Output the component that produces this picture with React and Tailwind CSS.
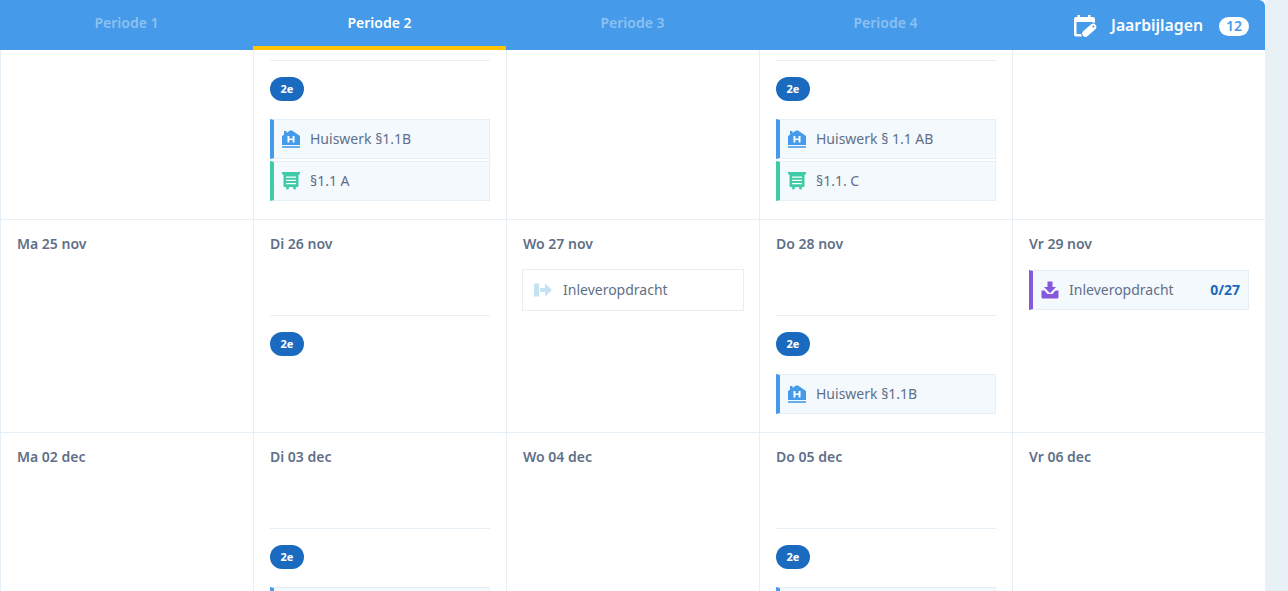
const font = { fontFamily: '"Noto Sans", "Open Sans", sans-serif' };

const HouseIcon = () => (
  <svg width="18" height="18" viewBox="0 0 18 18" className="shrink-0">
    <path fill="#459be9" d="M0 15V6l2-1.300V1h2.500v2L8 .5h2L18 6v9z" />
    <path fill="#459be9" d="M0 16.200h18v1.600H0z" />
    <path fill="#fff" d="M5.500 6h1.900v2.400h3.200V6h1.900v6.500h-1.900v-2.400H7.400v2.400H5.500z" />
  </svg>
);

const NoteIcon = () => (
  <svg width="18" height="18" viewBox="0 0 18 18" className="shrink-0">
    <path fill="#40cba8" d="M0 0h18v2.500h-1.500V14a1 1 0 0 1-1 1H14l-.5 2.500h-2L11 15H7l-.5 2.500h-2L4 15H2.500a1 1 0 0 1-1-1V2.500H0z" />
    <path fill="#fff" d="M4 4.500h10v1.200H4zM4 7.800h10v1.200H4zM4 11.100h10v1.200H4z" />
  </svg>
);

const ArrowIcon = () => (
  <svg width="18" height="14" viewBox="0 0 18 14" className="shrink-0">
    <rect x="0" y="0.500" width="5" height="13" fill="#c3e3f3" />
    <path fill="#c3e3f3" d="M6 5h5V0.500L18 7l-7 6.500V9H6z" />
  </svg>
);

const DownloadIcon = () => (
  <svg width="18" height="18" viewBox="0 0 18 18" className="shrink-0">
    <path fill="#8459dc" d="M6.500 0.500h5V6h3.500L9 12.200 3 6h3.500z" />
    <path fill="#8459dc" d="M0.500 9.500h3l3 3.600h5l3-3.600h3V16a1.500 1.500 0 0 1-1.500 1.500H2A1.500 1.500 0 0 1 .5 16z" />
  </svg>
);

const CalendarTagIcon = () => (
  <svg width="24" height="24" viewBox="0 0 24 24" className="shrink-0">
    <path fill="#fff" d="M1 5a2 2 0 0 1 2-2h1.500V1H7v2h8V1h2.500v2H20a2 2 0 0 1 2 2v7h-2.500V8h-16v12H9v2.500H3a2 2 0 0 1-2-2z" />
    <path d="M12.500 19.500 20 13" stroke="#459be9" strokeWidth="9" strokeLinecap="round" />
    <path d="M12.500 19.500 20 13" stroke="#fff" strokeWidth="6.500" strokeLinecap="round" />
    <circle cx="20.500" cy="12.500" r="1" fill="#459be9" />
  </svg>
);

const Pill = () => (
  <span className="flex h-6 w-[34px] items-center justify-center rounded-full bg-[#1a6bbf] text-[11px] font-bold text-white">2e</span>
);

const Item = ({ accent, icon, label, count }) => (
  <div className={`flex h-10 items-center border border-l-0 border-[#e6eff5] bg-[#f4f9fd] ${accent}`}>
    <span className="ml-2 flex w-[18px] justify-center">{icon}</span>
    <span className="ml-[10px] text-sm text-[#5f6f88]">{label}</span>
    {count && <span className="ml-auto mr-2 text-sm font-bold text-[#1a6bbf]">{count}</span>}
  </div>
);

const Hw = ({ label }) => <Item accent="border-l-4 border-l-[#459be9]" icon={<HouseIcon />} label={label} />;
const Nt = ({ label }) => <Item accent="border-l-4 border-l-[#40cba8]" icon={<NoteIcon />} label={label} />;

const LessonBody = ({ children }) => (
  <>
    <div className="border-t border-[#e6eff5] pt-4">
      <Pill />
    </div>
    <div className="mt-[18px] flex flex-col gap-[2px]">{children}</div>
  </>
);

const Lesson = ({ children }) => (
  <div className="mt-[61px]">
    <LessonBody>{children}</LessonBody>
  </div>
);

const Cell = ({ date, children }) => (
  <div className="h-full overflow-hidden border-l border-[#e6eff5] px-4 pt-[14px]">
    <div className="h-5 text-sm font-semibold leading-5 text-[#5f6f88]">{date}</div>
    {children}
  </div>
);

const TopCell = ({ children }) => (
  <div className="h-full border-l border-[#e6eff5] px-4 pt-[10px]">{children}</div>
);

const Tab = ({ label, active }) => (
  <div
    className={`flex h-[50px] w-[253px] items-center justify-center border-b-4 text-sm font-semibold ${
      active ? 'border-[#ffc400] text-white' : 'border-transparent text-white/40'
    }`}
  >
    {label}
  </div>
);

export default function App() {
  return (
    <div style={font} className="flex h-[591px] w-[1288px] overflow-hidden bg-[#e8f1f5]">
      <div className="flex h-full w-[1265px] flex-col bg-white">
        <header className="flex h-[50px] shrink-0 rounded-tr-md bg-[#459be9]">
          <Tab label="Periode 1" />
          <Tab label="Periode 2" active />
          <Tab label="Periode 3" />
          <Tab label="Periode 4" />
          <div className="flex flex-1 items-center pl-[61px] pt-[2px] text-white">
            <CalendarTagIcon />
            <span className="ml-[14px] text-[15.800px] font-semibold">Jaarbijlagen</span>
            <span className="ml-4 flex h-[19px] w-[30px] items-center justify-center rounded-full bg-white text-sm font-semibold text-[#459be9]">12</span>
          </div>
        </header>

        <div className="grid h-[170px] shrink-0 grid-cols-[repeat(5,253px)] border-b border-[#e6eff5]">
          <TopCell />
          <TopCell>
            <LessonBody>
              <Hw label="Huiswerk §1.1B" />
              <Nt label="§1.1 A" />
            </LessonBody>
          </TopCell>
          <TopCell />
          <TopCell>
            <LessonBody>
              <Hw label="Huiswerk § 1.1 AB" />
              <Nt label="§1.1. C" />
            </LessonBody>
          </TopCell>
          <TopCell />
        </div>

        <div className="grid h-[213px] shrink-0 grid-cols-[repeat(5,253px)] border-b border-[#e6eff5]">
          <Cell date="Ma 25 nov" />
          <Cell date="Di 26 nov">
            <Lesson />
          </Cell>
          <Cell date="Wo 27 nov">
            <div className="-mx-px mt-[15px] flex h-[42px] items-center border border-[#e6eff5] bg-white">
              <span className="ml-[11px] flex w-[18px] justify-center"><ArrowIcon /></span>
              <span className="ml-[11px] text-sm text-[#5f6f88]">Inleveropdracht</span>
            </div>
          </Cell>
          <Cell date="Do 28 nov">
            <Lesson>
              <Hw label="Huiswerk §1.1B" />
            </Lesson>
          </Cell>
          <Cell date="Vr 29 nov">
            <div className="mt-4">
              <Item accent="border-l-4 border-l-[#8459dc]" icon={<DownloadIcon />} label="Inleveropdracht" count="0/27" />
            </div>
          </Cell>
        </div>

        <div className="grid min-h-0 flex-1 grid-cols-[repeat(5,253px)]">
          <Cell date="Ma 02 dec" />
          <Cell date="Di 03 dec">
            <Lesson>
              <Hw label="" />
            </Lesson>
          </Cell>
          <Cell date="Wo 04 dec" />
          <Cell date="Do 05 dec">
            <Lesson>
              <Hw label="" />
            </Lesson>
          </Cell>
          <Cell date="Vr 06 dec" />
        </div>
      </div>
    </div>
  );
}
